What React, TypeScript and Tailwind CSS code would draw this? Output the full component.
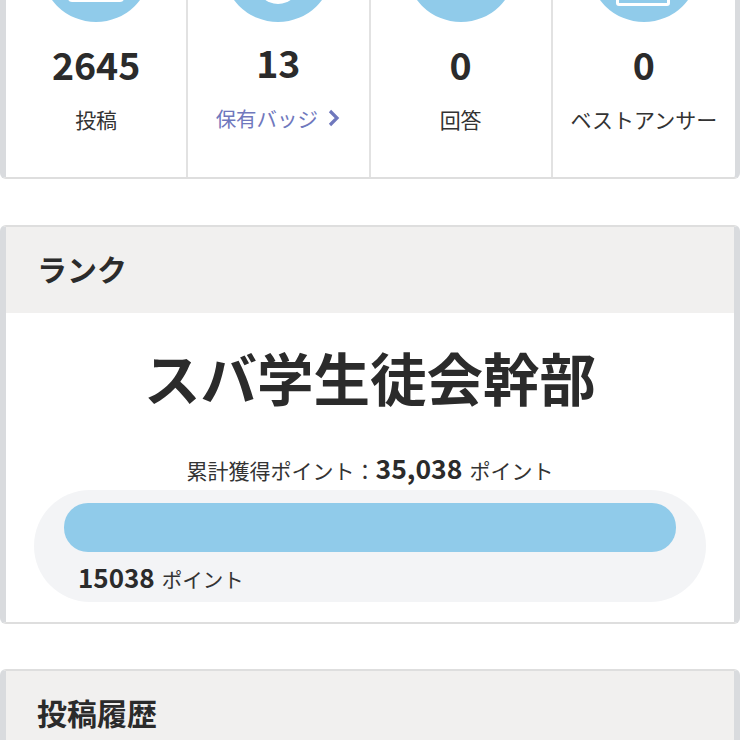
const stats = [
  { value: '2645', label: '投稿', icon: 'post' },
  { value: '13', label: '保有バッジ', icon: 'badge', link: true },
  { value: '0', label: '回答', icon: 'none' },
  { value: '0', label: 'ベストアンサー', icon: 'best' },
];

function StatIcon({ icon }: { icon: string }) {
  return (
    <div className="relative w-[110px] h-[110px] rounded-full bg-[#90cbea] overflow-hidden">
      {icon === 'post' && (
        <div className="absolute left-[27px] bottom-[20px] w-[56px] h-[30px] rounded-[4px] bg-white" />
      )}
      {icon === 'badge' && (
        <div className="absolute left-[33px] bottom-[18px] w-[44px] h-[44px] rounded-full bg-white" />
      )}
      {icon === 'best' && (
        <div className="absolute left-[27px] bottom-[16px] w-[54px] h-[30px] rounded-[3px] border-[3px] border-white" />
      )}
    </div>
  );
}

function SectionHeader({ title }: { title: string }) {
  return (
    <div className="h-[86px] pl-[31px] pb-[4px] flex items-center bg-[#f1f0ef]">
      <h2 className="text-[30px] leading-none font-bold text-[#2b2b2b]">{title}</h2>
    </div>
  );
}

export default function App() {
  return (
    <div
      className="h-[740px] overflow-hidden bg-white text-[#2b2b2b]"
      style={{ fontFamily: '"Noto Sans CJK JP", "Noto Sans", sans-serif' }}
    >
      {/* Stats card */}
      <section className="mt-[-88px] h-[267px] rounded-[6px] bg-white border-l-[6px] border-r-[5px] border-b-2 border-x-[#d9dbde] border-b-[#dedede] grid grid-cols-4">
        {stats.map((s, i) => (
          <div
            key={i}
            className={`flex flex-col items-center ${i < 3 ? 'border-r-2 border-[#e2e2e2]' : ''}`}
          >
            <StatIcon icon={s.icon} />
            <div className={`text-[37.5px] leading-none font-bold ${s.link ? 'mt-[21px]' : 'mt-[23px]'}`}>{s.value}</div>
            {s.link ? (
              <div className="mt-[27px] text-[20.5px] leading-none text-[#6f78bd] flex items-center gap-[10px]">
                {s.label}
                <svg width="13" height="18" viewBox="0 0 13 18" fill="none" stroke="#6f78bd" strokeWidth="3.2">
                  <path d="M2 2l7 7-7 7" />
                </svg>
              </div>
            ) : (
              <div className="mt-[26px] text-[21px] leading-none text-[#333]">{s.label}</div>
            )}
          </div>
        ))}
      </section>

      {/* Rank card */}
      <section className="mt-[46px] h-[399px] rounded-[6px] overflow-hidden bg-white border-x-[6px] border-t-2 border-b-2 border-l-[#d9dbde] border-r-[#d9dbde] border-y-[#dedede]">
        <SectionHeader title="ランク" />
        <div className="pt-[35px] text-center text-[56.5px] leading-none font-bold text-[#2b2b2b]">
          スバ学生徒会幹部
        </div>
        <div className="mt-[50px] flex items-baseline justify-center text-[21px] leading-none text-[#333]">
          累計獲得ポイント：
          <span className="mr-[7px] text-[26.5px] font-bold text-[#2b2b2b]">35,038</span>
          ポイント
        </div>
        <div className="mx-[28px] mt-[9px] h-[112px] rounded-[56px] bg-[#f3f4f6] px-[30px] pt-[13px]">
          <div className="h-[49px] rounded-[24px] bg-[#90cbea]" />
          <div className="mt-[12px] ml-[14px] flex items-baseline text-[20.5px] leading-none text-[#333]">
            <span className="mr-[7px] text-[26px] font-bold text-[#2b2b2b]">15038</span>
            ポイント
          </div>
        </div>
      </section>

      {/* Post history card */}
      <section className="mt-[45px] rounded-t-[6px] overflow-hidden bg-white border-x-[6px] border-t-2 border-x-[#d9dbde] border-t-[#dedede]">
        <SectionHeader title="投稿履歴" />
      </section>
    </div>
  );
}
